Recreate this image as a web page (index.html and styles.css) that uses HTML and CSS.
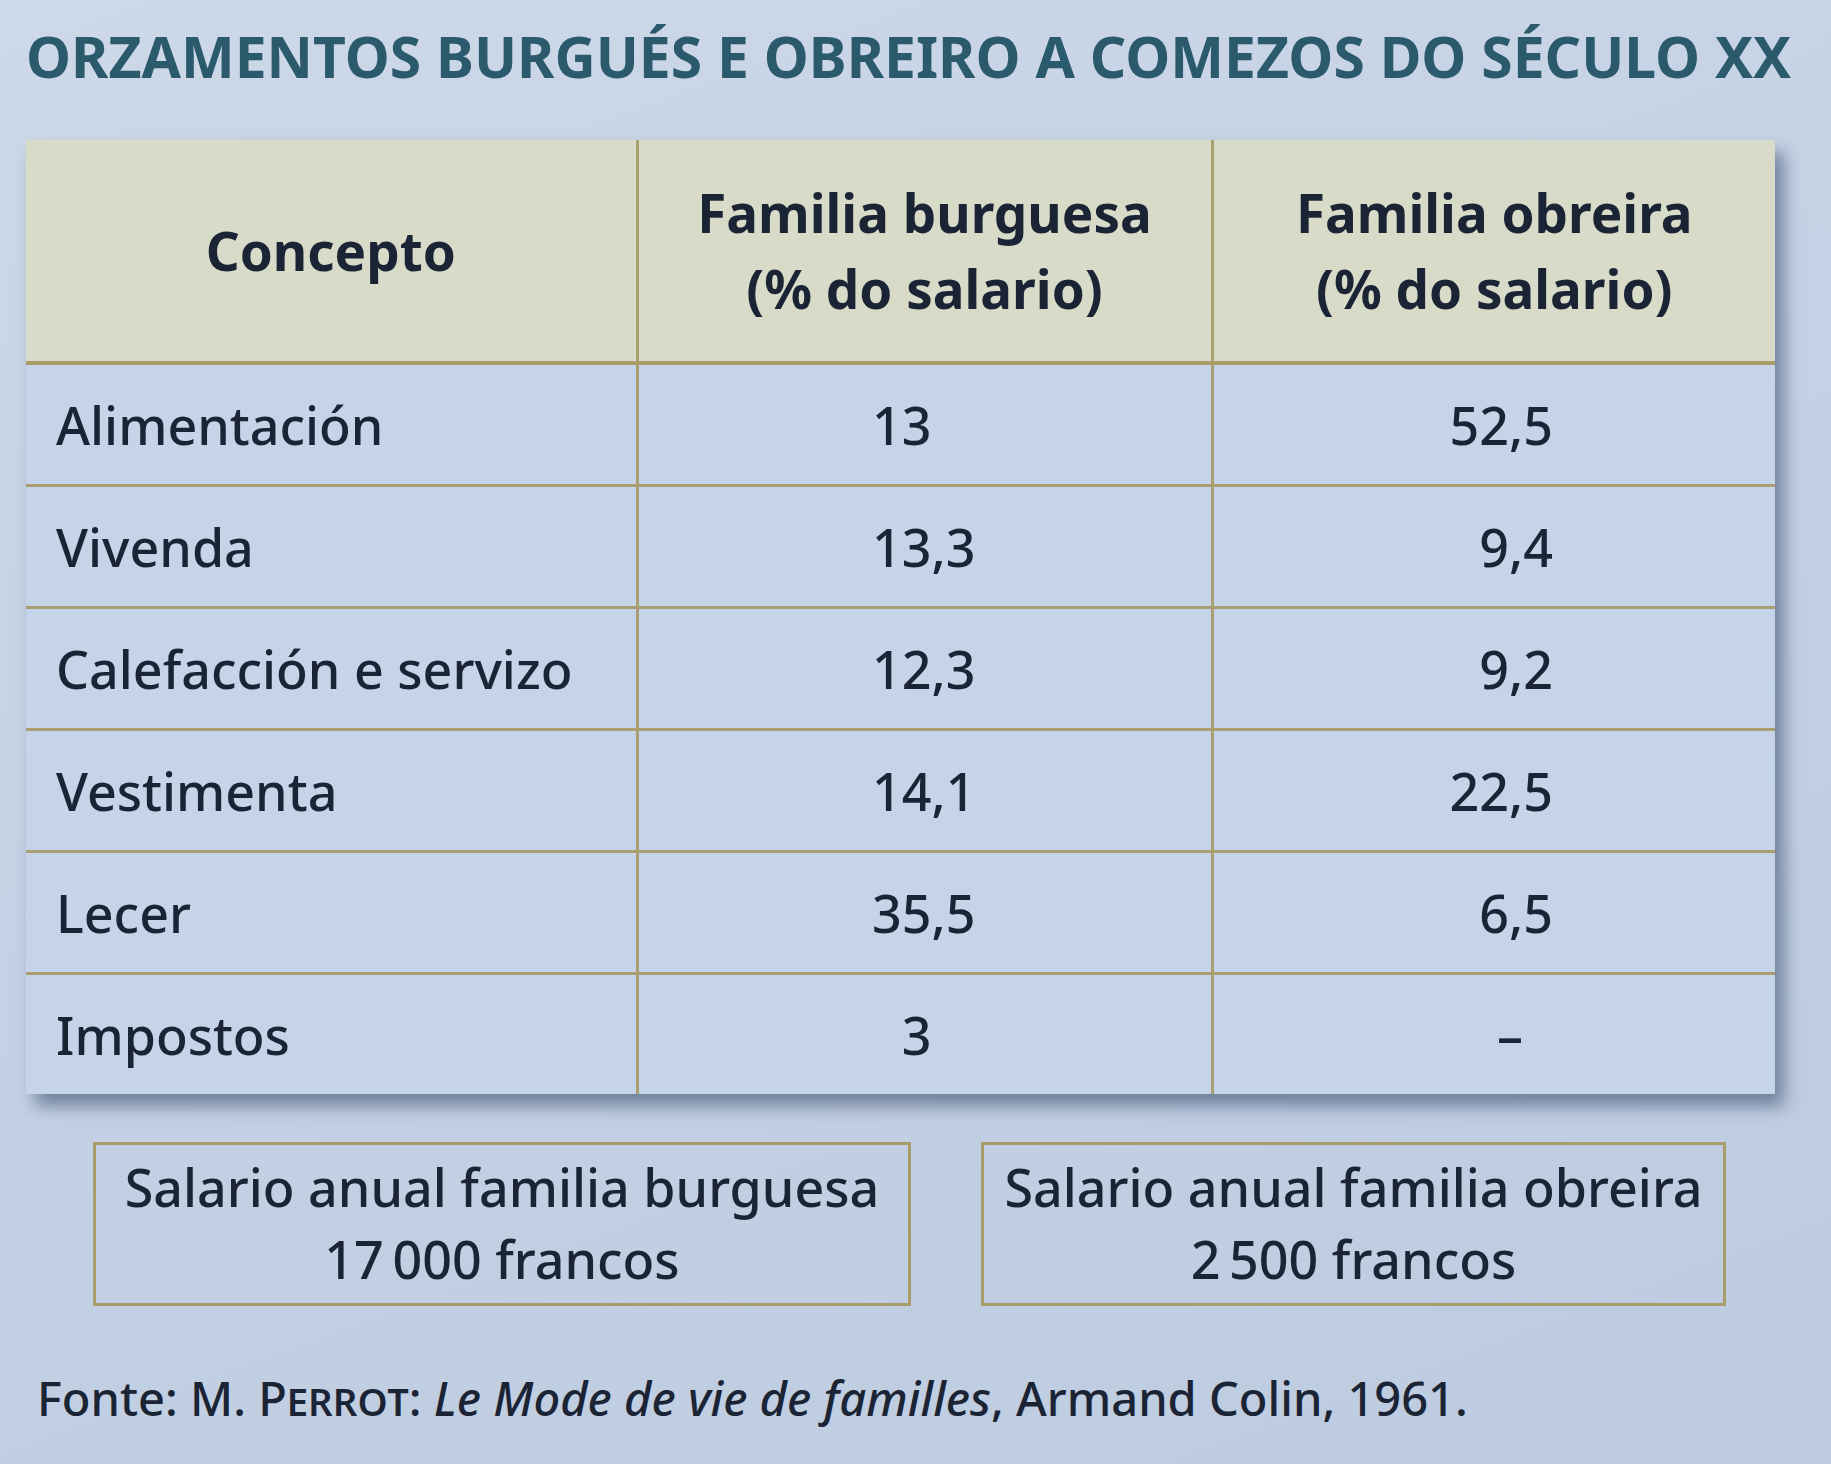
FILE: index.html
```html
<!DOCTYPE html>
<html lang="gl">
<head>
<meta charset="utf-8">
<title>Orzamentos burgués e obreiro</title>
<link rel="stylesheet" href="styles.css">
</head>
<body>
<main class="page">
  <h1 class="title">ORZAMENTOS BURGUÉS E OBREIRO A COMEZOS DO SÉCULO XX</h1>

  <div class="table-wrap">
    <table class="budget">
      <colgroup>
        <col class="c1">
        <col class="c2">
        <col class="c3">
      </colgroup>
      <thead>
        <tr>
          <th>Concepto</th>
          <th>Familia burguesa<br>(% do salario)</th>
          <th>Familia obreira<br>(% do salario)</th>
        </tr>
      </thead>
      <tbody>
        <tr>
          <td class="label">Alimentación</td>
          <td class="bur"><span class="int">13</span></td>
          <td class="obr">52,5</td>
        </tr>
        <tr>
          <td class="label">Vivenda</td>
          <td class="bur"><span class="int">13</span>,3</td>
          <td class="obr">9,4</td>
        </tr>
        <tr>
          <td class="label">Calefacción e servizo</td>
          <td class="bur"><span class="int">12</span>,3</td>
          <td class="obr">9,2</td>
        </tr>
        <tr>
          <td class="label">Vestimenta</td>
          <td class="bur"><span class="int">14</span>,1</td>
          <td class="obr">22,5</td>
        </tr>
        <tr>
          <td class="label">Lecer</td>
          <td class="bur"><span class="int">35</span>,5</td>
          <td class="obr">6,5</td>
        </tr>
        <tr>
          <td class="label">Impostos</td>
          <td class="bur"><span class="int">3</span></td>
          <td class="obr dash">–</td>
        </tr>
      </tbody>
    </table>
  </div>

  <div class="salaries">
    <div class="salary-box box-bur">Salario anual familia burguesa<br>17&#8239;000 francos</div>
    <div class="salary-box box-obr">Salario anual familia obreira<br>2&#8239;500 francos</div>
  </div>

  <p class="source">Fonte: M. <span class="sc">Perrot</span>: <em>Le Mode de vie de familles</em>, Armand Colin, 1961.</p>
</main>
</body>
</html>
```

FILE: styles.css
```css
html, body {
  margin: 0;
  padding: 0;
}

body {
  width: 1831px;
  height: 1464px;
  overflow: hidden;
  background: linear-gradient(160deg, #cdd8e8 0%, #c5d2e5 45%, #bdcbe0 100%);
  color: #1b2434;
  font-family: "Noto Sans", "Open Sans", "DejaVu Sans", sans-serif;
  font-stretch: condensed;
  font-weight: 500;
}

.page {
  display: flex;
  flex-direction: column;
  padding: 28px 0 0 26px;
}

.title {
  margin: 0;
  font-size: 57px;
  line-height: 57px;
  font-weight: 700;
  color: #2b5a6c;
  white-space: nowrap;
}

.table-wrap {
  margin-top: 55px;
  width: 1749px;
  box-shadow: 9px 12px 16px rgba(45, 65, 100, 0.55);
}

.budget {
  width: 1749px;
  border-collapse: collapse;
  table-layout: fixed;
  background: #c6d4ea;
  font-size: 52px;
}

.budget .c1 { width: 611px; }
.budget .c2 { width: 575px; }
.budget .c3 { width: 563px; }

.budget th {
  height: 221px;
  padding: 0;
  background: #d8dbc8;
  font-weight: 700;
  font-size: 53px;
  line-height: 76px;
  text-align: center;
  vertical-align: middle;
  border-bottom: 4px solid #a99c66;
}

.budget th + th,
.budget td + td {
  border-left: 3px solid #aa9f72;
}

.budget td {
  height: 119px;
  padding: 0;
  line-height: 60px;
  vertical-align: middle;
}

.budget tbody tr + tr td {
  border-top: 3px solid #aa9f72;
}

.budget td.label {
  padding-left: 30px;
  text-align: left;
}

.budget td.bur {
  padding-left: 203px;
  text-align: left;
}

.budget .int {
  display: inline-block;
  width: 90px;
  text-align: right;
}

.budget td.obr {
  padding-right: 222px;
  text-align: right;
}

.budget td.dash {
  padding-right: 252px;
}

.salaries {
  display: flex;
  gap: 70px;
  margin-top: 48px;
  padding-left: 67px;
}

.salary-box {
  border: 3px solid #a89c6a;
  padding: 6px 0 8px;
  font-size: 52px;
  line-height: 72px;
  text-align: center;
  white-space: nowrap;
}

.box-bur { width: 812px; }
.box-obr { width: 739px; }

.source {
  margin: 62px 0 0 11px;
  font-size: 47px;
  line-height: 60px;
  white-space: nowrap;
}

.source .sc {
  font-variant: small-caps;
}

.source em {
  font-style: italic;
}
```
